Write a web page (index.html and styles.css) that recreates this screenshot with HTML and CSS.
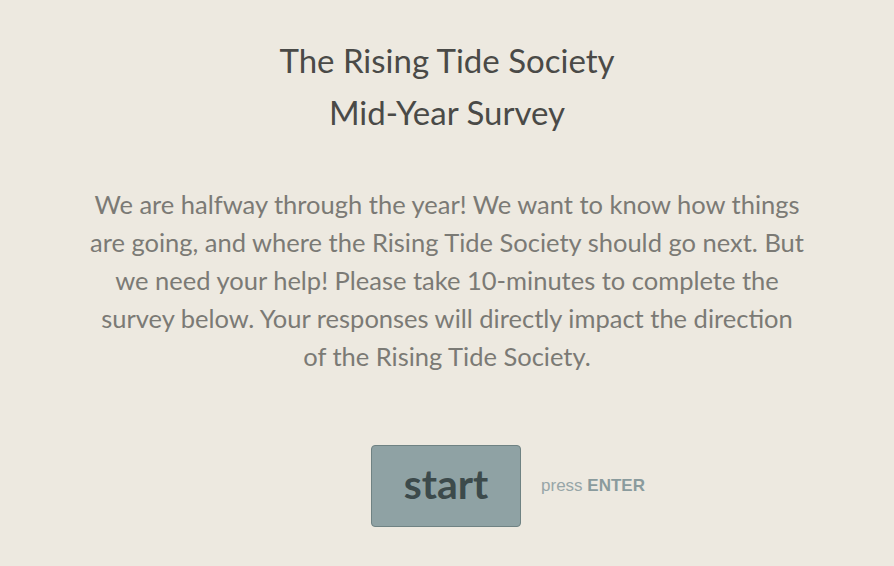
FILE: index.html
```html
<!DOCTYPE html>
<html lang="en">
<head>
  <meta charset="UTF-8">
  <title>The Rising Tide Society - Mid-Year Survey</title>
  <link rel="stylesheet" href="styles.css">
</head>
<body>
  <div class="welcome">
    <h1 class="title">The Rising Tide Society<br>Mid-Year Survey</h1>

    <p class="intro">We are halfway through the year! We want to know how things are going, and where the Rising Tide Society should go next. But we need your help! Please take 10-minutes to complete the survey below. Your responses will directly impact the direction of the Rising Tide Society.</p>

    <div class="actions">
      <button class="start-btn" type="button">start</button>
      <span class="hint">press <b>ENTER</b></span>
    </div>
  </div>
</body>
</html>
```

FILE: styles.css
```css
html, body {
  margin: 0;
  height: 100%;
}
body {
  background: #ede9e0;
  font-family: Lato, "Noto Sans", sans-serif;
}
.welcome {
  width: 760px;
  margin: 0 auto;
  padding-top: 34px;
  text-align: center;
}
.title {
  margin: 0;
  font-size: 33px;
  font-weight: normal;
  line-height: 52px;
  color: #4a4a47;
}
.intro {
  width: 717px;
  margin: 47px auto 0;
  font-size: 25.5px;
  line-height: 38px;
  color: #7b7a75;
}
.actions {
  display: flex;
  align-items: center;
  justify-content: center;
  margin-top: 70px;
  padding-left: 122px;
}
.start-btn {
  width: 150px;
  height: 82px;
  background: #8fa2a4;
  border: 1px solid #6f8283;
  border-radius: 4px;
  font-family: inherit;
  font-size: 41px;
  font-weight: bold;
  color: #3c4a4b;
  padding: 0 0 6px;
}
.hint {
  margin-left: 20px;
  font-family: "Liberation Sans", Arial, sans-serif;
  font-size: 17px;
  color: #97a6a8;
}
.hint b {
  color: #8a9b9d;
}
```
